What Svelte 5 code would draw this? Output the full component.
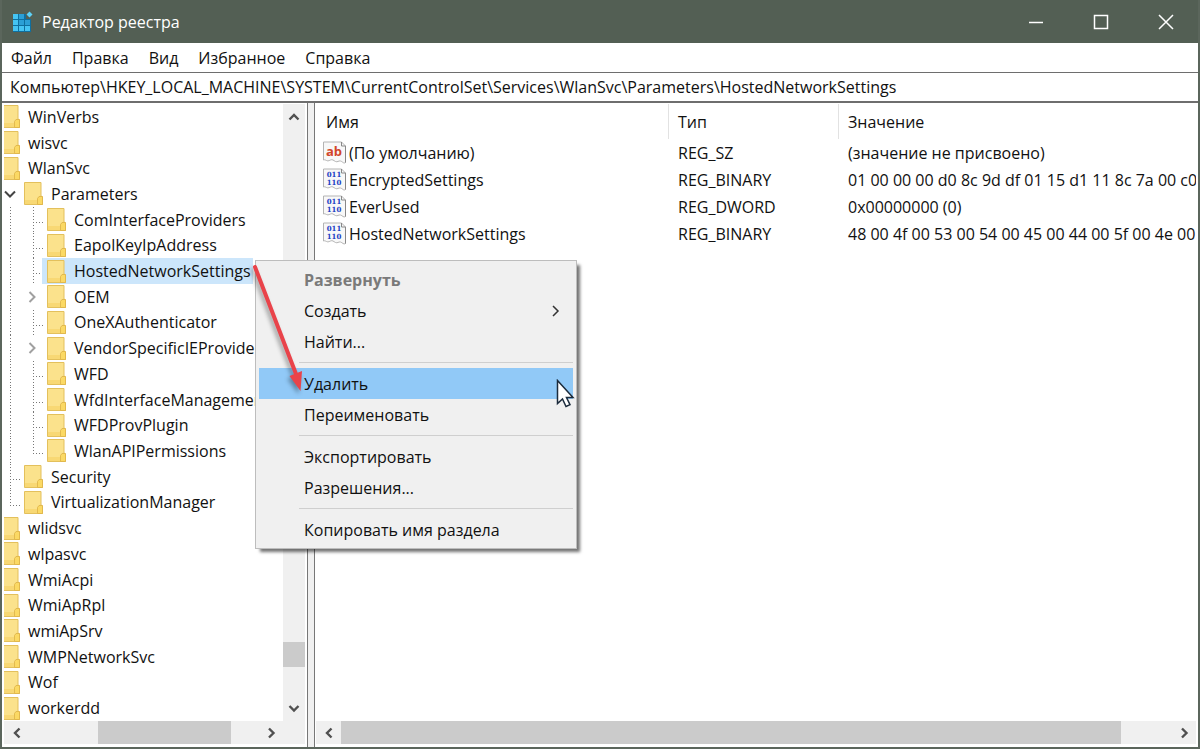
<script lang="ts">
  type Guide = 'line' | 'branch' | 'end' | 'open' | 'closed' | 'none';
  type Node = { name: string; guides: Guide[]; selected?: boolean };

  const menus = ['Файл', 'Правка', 'Вид', 'Избранное', 'Справка'];
  let address = $state(
    'Компьютер\\HKEY_LOCAL_MACHINE\\SYSTEM\\CurrentControlSet\\Services\\WlanSvc\\Parameters\\HostedNetworkSettings'
  );

  const nodes: Node[] = [
    { name: 'WinVerbs', guides: [] },
    { name: 'wisvc', guides: [] },
    { name: 'WlanSvc', guides: [] },
    { name: 'Parameters', guides: ['open'] },
    { name: 'ComInterfaceProviders', guides: ['line', 'branch'] },
    { name: 'EapolKeyIpAddress', guides: ['line', 'branch'] },
    { name: 'HostedNetworkSettings', guides: ['line', 'branch'], selected: true },
    { name: 'OEM', guides: ['line', 'closed'] },
    { name: 'OneXAuthenticator', guides: ['line', 'branch'] },
    { name: 'VendorSpecificIEProviders', guides: ['line', 'closed'] },
    { name: 'WFD', guides: ['line', 'branch'] },
    { name: 'WfdInterfaceManagement', guides: ['line', 'branch'] },
    { name: 'WFDProvPlugin', guides: ['line', 'branch'] },
    { name: 'WlanAPIPermissions', guides: ['line', 'end'] },
    { name: 'Security', guides: ['branch'] },
    { name: 'VirtualizationManager', guides: ['end'] },
    { name: 'wlidsvc', guides: [] },
    { name: 'wlpasvc', guides: [] },
    { name: 'WmiAcpi', guides: [] },
    { name: 'WmiApRpl', guides: [] },
    { name: 'wmiApSrv', guides: [] },
    { name: 'WMPNetworkSvc', guides: [] },
    { name: 'Wof', guides: [] },
    { name: 'workerdd', guides: [] }
  ];

  const values = [
    { icon: 'text', name: '(По умолчанию)', type: 'REG_SZ', data: '(значение не присвоено)' },
    { icon: 'bin', name: 'EncryptedSettings', type: 'REG_BINARY', data: '01 00 00 00 d0 8c 9d df 01 15 d1 11 8c 7a 00 c0 4' },
    { icon: 'bin', name: 'EverUsed', type: 'REG_DWORD', data: '0x00000000 (0)' },
    { icon: 'bin', name: 'HostedNetworkSettings', type: 'REG_BINARY', data: '48 00 4f 00 53 00 54 00 45 00 44 00 5f 00 4e 00 45' }
  ];

  const commands = [
    [
      { label: 'Развернуть', disabled: true },
      { label: 'Создать', sub: true },
      { label: 'Найти...' }
    ],
    [{ label: 'Удалить', active: true }, { label: 'Переименовать' }],
    [{ label: 'Экспортировать' }, { label: 'Разрешения...' }],
    [{ label: 'Копировать имя раздела' }]
  ] as { label: string; disabled?: boolean; sub?: boolean; active?: boolean }[][];
</script>

{#snippet chevron(d: string)}
  <svg width="12" height="12" viewBox="0 0 12 12" aria-hidden="true">
    <path {d} fill="none" stroke="currentColor" stroke-width="2.4" />
  </svg>
{/snippet}

<div class="window">
  <header class="title">
    <svg class="logo" width="22" height="22" viewBox="0 0 22 22" aria-hidden="true">
      <path fill="#0f6f9f" d="M1 3h13v5h5v13H1z" />
      <path fill="#45c4f3" d="M1 3h5v5H1zM1 9h5v5H1zM1 15h5v5H1zM7 15h5v5H7zM13 15h5v5h-5z" />
      <path fill="#2b9fd6" d="M7 3h5v5H7zM7 9h5v5H7zM13 9h5v5h-5z" />
      <path fill="#5ed2f7" d="M17.500 0.500l3 3-3 3-3-3z" />
    </svg>
    <h1>Редактор реестра</h1>
    <div class="controls">
      <button aria-label="Свернуть">
        <svg width="16" height="16" viewBox="0 0 16 16"><path d="M1 8.500h14" /></svg>
      </button>
      <button aria-label="Развернуть окно">
        <svg width="16" height="16" viewBox="0 0 16 16"><path d="M1.500 1.500h13v13h-13z" /></svg>
      </button>
      <button aria-label="Закрыть">
        <svg width="16" height="16" viewBox="0 0 16 16"><path d="M1 1l14 14M15 1L1 15" /></svg>
      </button>
    </div>
  </header>

  <nav class="menubar">
    {#each menus as m}<button>{m}</button>{/each}
  </nav>

  <input class="address" type="text" aria-label="Адрес" bind:value={address} />

  <main>
    <section class="pane keys">
      <ul class="tree">
        {#each nodes as n}
          <li>
            {#each n.guides as g}
              <span class="guide {g}">
                {#if g === 'open'}
                  <svg width="14" height="12" viewBox="0 0 14 12"><path d="M2 3.500l5 5 5-5" fill="none" stroke="#444" stroke-width="2" /></svg>
                {:else if g === 'closed'}
                  <svg width="12" height="14" viewBox="0 0 12 14"><path d="M3.500 2l5 5-5 5" fill="none" stroke="#a0a0a0" stroke-width="2" /></svg>
                {/if}
              </span>
            {/each}
            <button class="node" class:selected={n.selected}>
              <svg width="19" height="23" viewBox="0 0 19 23" aria-hidden="true">
                <path fill="#fbe28c" stroke="#e3c05c" d="M0.500 0.500h16.500v13.500l1.500 1v7.500H0.500z" />
                <path fill="#f6d264" d="M1 18h12v4H1z" opacity=".6" />
                <path fill="#fbd964" stroke="#dfb64b" stroke-width=".9" d="M13.500 22.500v-6l1.500-2h3.500v8z" />
              </svg>
              <span>{n.name}</span>
            </button>
          </li>
        {/each}
      </ul>
      <div class="vbar">
        <button aria-label="Вверх">{@render chevron('M1.500 8.500L6 4l4.500 4.500')}</button>
        <div class="track"><i class="thumb"></i></div>
        <button aria-label="Вниз">{@render chevron('M1.500 4L6 8.500 10.500 4')}</button>
      </div>
      <div class="hbar">
        <button aria-label="Влево">{@render chevron('M8.500 1.500L4 6l4.500 4.500')}</button>
        <div class="track"><i class="thumb"></i></div>
        <button aria-label="Вправо">{@render chevron('M4 1.500L8.500 6 4 10.500')}</button>
      </div>
      <div class="corner"></div>
    </section>

    <section class="pane data">
      <div class="scroll">
        <table>
          <colgroup><col class="c-name" /><col class="c-type" /><col /></colgroup>
          <thead>
            <tr><th>Имя</th><th>Тип</th><th>Значение</th></tr>
          </thead>
          <tbody>
            {#each values as v}
              <tr>
                <td>
                  <div class="value">
                    <svg width="24" height="23" viewBox="0 0 24 23" aria-hidden="true">
                      <path
                        d="M.5 1h18l4 4v16.500c-2 1.500-3-1-5-1.500s-3 1.500-5 .5-3-2.500-5-1.500-3 1-4 .500-2-1-3-.5z"
                        fill="#f8f8f8" stroke="#b4b4b4" />
                      <path d="M18.500 1v4h4v16.500" fill="none" stroke="#888" />
                      {#if v.icon === 'text'}
                        <text x="11" y="15" class="ab">ab</text>
                      {:else}
                        <text x="11" y="9" class="bits">011</text>
                        <text x="11" y="17" class="bits">110</text>
                      {/if}
                    </svg>
                    <span>{v.name}</span>
                  </div>
                </td>
                <td>{v.type}</td>
                <td>{v.data}</td>
              </tr>
            {/each}
          </tbody>
        </table>
      </div>
      <div class="hbar">
        <button aria-label="Влево">{@render chevron('M8.500 1.500L4 6l4.500 4.500')}</button>
        <div class="track"><i class="thumb"></i></div>
        <button aria-label="Вправо">{@render chevron('M4 1.500L8.500 6 4 10.500')}</button>
      </div>
    </section>
  </main>

  <div class="context" role="menu">
    {#each commands as group, i}
      {#if i > 0}<hr />{/if}
      {#each group as c}
        <button role="menuitem" class:active={c.active} disabled={c.disabled}>
          <span>{c.label}</span>
          {#if c.sub}
            <svg width="10" height="14" viewBox="0 0 10 14" aria-hidden="true"><path d="M2 2l5 5-5 5" fill="none" stroke="#333" stroke-width="1.500" /></svg>
          {/if}
        </button>
      {/each}
    {/each}
  </div>

  <svg class="arrow" width="60" height="136" viewBox="0 0 60 136" aria-hidden="true">
    <path d="M6 7L47 114" stroke="#e9434a" stroke-width="4" stroke-linecap="round" fill="none" />
    <path d="M40.500 116l12.500-5-1.500 20z" fill="#e9434a" />
  </svg>
  <svg class="cursor" width="19" height="30" viewBox="0 0 19 30" aria-hidden="true">
    <path d="M1.500 1.500v23l5-4.500 3.500 7.500 4-1.800-3.500-7.200h6.500z" fill="#fff" stroke="#1b2b3c" stroke-width="1.500" />
  </svg>
</div>

<style>
  :global(body) {
    margin: 0;
  }
  .window {
    position: relative;
    box-sizing: border-box;
    height: 100vh;
    display: flex;
    flex-direction: column;
    overflow: hidden;
    border: solid #5b665c;
    border-width: 0 2px 2px;
    background: #fff;
    color: #111;
    font: 16px/20px 'Open Sans', 'Noto Sans', sans-serif;
  }
  button {
    font: inherit;
    color: inherit;
    border: 0;
    margin: 0;
    padding: 0;
    background: none;
    text-align: left;
    white-space: nowrap;
  }
  svg {
    display: block;
    flex: none;
  }

  .title {
    flex: none;
    height: 43px;
    margin: 0 -2px;
    padding: 0 2px 0 12px;
    display: flex;
    align-items: center;
    gap: 8px;
    background: #535f54;
    color: #fff;
  }
  h1 {
    margin: 0;
    font: inherit;
  }
  .controls {
    margin-left: auto;
    display: flex;
    align-self: stretch;
  }
  .controls button {
    width: 65px;
    display: grid;
    place-items: center;
  }
  .controls path {
    fill: none;
    stroke: #fff;
    stroke-width: 1.5;
  }

  .menubar {
    flex: none;
    height: 29px;
    padding-left: 9px;
    display: flex;
    align-items: center;
    gap: 20px;
  }
  .address {
    flex: none;
    height: 31px;
    box-sizing: border-box;
    margin: 0;
    padding: 0 8px;
    border: solid #6e6e6e;
    border-width: 1px 0 2px;
    border-radius: 0;
    outline: 0;
    background: #fff;
    color: inherit;
    font: inherit;
  }

  main {
    flex: 1;
    min-height: 0;
    display: flex;
    gap: 6px;
    background: #f0f0f0;
  }
  .pane {
    box-sizing: border-box;
    background: #fff;
    min-width: 0;
  }
  .keys {
    flex: none;
    width: 306px;
    padding: 1px 2px 3px;
    border-right: 1px solid #777;
    display: grid;
    grid-template: minmax(0, 1fr) 23px / minmax(0, 1fr) 22px;
  }
  .data {
    flex: 1;
    padding: 1px 2px 3px 1px;
    border-left: 1px solid #777;
    display: flex;
    flex-direction: column;
  }

  .tree {
    list-style: none;
    margin: 0;
    padding: 0;
    overflow: hidden;
    display: flex;
    flex-direction: column;
  }
  .tree li {
    flex: 1;
    min-height: 0;
    margin-left: -3px;
    display: flex;
  }
  .guide {
    flex: none;
    width: 23px;
    display: flex;
    align-items: center;
    padding-left: 2px;
    box-sizing: border-box;
    background-repeat: no-repeat;
  }
  .line {
    background-image: repeating-linear-gradient(#777 0 1px, transparent 1px 3px);
    background-size: 1px 100%;
    background-position: 9px 0;
  }
  .branch,
  .end {
    background-image: repeating-linear-gradient(#777 0 1px, transparent 1px 3px),
      repeating-linear-gradient(90deg, #777 0 1px, transparent 1px 3px);
    background-size: 1px 100%, 10px 1px;
    background-position: 9px 0, 9px 15px;
  }
  .end {
    background-size: 1px 15px, 10px 1px;
  }
  .node {
    position: relative;
    margin-left: -5px;
    padding: 0 2px 0 5px;
    display: flex;
    align-items: center;
    gap: 8px;
  }
  .selected {
    background: #cce6fb;
  }

  .vbar,
  .hbar,
  .corner {
    background: #f0f0f0;
    color: #505050;
    display: flex;
  }
  .vbar {
    flex-direction: column;
  }
  .vbar button,
  .hbar button {
    flex: none;
    display: grid;
    place-items: center;
    width: 22px;
    height: 26px;
  }
  .hbar {
    flex: none;
    height: 23px;
  }
  .hbar button {
    width: 25px;
    height: 23px;
  }
  .track {
    flex: 1;
    display: flex;
  }
  .thumb {
    background: #cbcbcb;
  }
  .vbar .track {
    flex-direction: column;
    justify-content: flex-end;
    padding-bottom: 28px;
  }
  .vbar .thumb {
    height: 25px;
  }
  .keys .hbar .thumb {
    margin-left: 30%;
    width: 58%;
  }
  .data .hbar .thumb {
    width: 94%;
  }

  .scroll {
    flex: 1;
    min-height: 0;
    overflow: hidden;
  }
  table {
    width: 100%;
    table-layout: fixed;
    border-collapse: separate;
    border-spacing: 0;
  }
  .c-name {
    width: 353px;
  }
  .c-type {
    width: 170px;
  }
  th,
  td {
    box-sizing: border-box;
    padding: 0 0 0 9px;
    text-align: left;
    font-weight: 400;
    white-space: nowrap;
    overflow: hidden;
  }
  th {
    height: 35px;
    border-right: 1px solid #e2e2e2;
  }
  th:last-child {
    border-right: 0;
  }
  td {
    height: 27px;
  }
  th:first-child {
    padding-left: 10px;
  }
  td:first-child {
    padding-left: 7px;
  }
  .value {
    display: flex;
    align-items: center;
    gap: 2px;
  }
  .ab {
    font: bold 13px 'Open Sans', sans-serif;
    fill: #d2452a;
    text-anchor: middle;
  }
  .bits {
    font: bold 7px 'DejaVu Serif', serif;
    fill: #1c3fc4;
    text-anchor: middle;
  }

  .context {
    position: absolute;
    left: 253px;
    top: 260px;
    width: 322px;
    box-sizing: border-box;
    padding: 3px;
    border: 1px solid #bdbdbd;
    background: #f0f0f0;
    box-shadow: 4px 4px 3px -1px rgba(0, 0, 0, 0.55);
    display: flex;
    flex-direction: column;
  }
  .context button {
    height: 31px;
    padding: 0 12px 0 45px;
    display: flex;
    align-items: center;
    justify-content: space-between;
  }
  .context button:disabled {
    color: #7a7a7a;
    font-weight: 700;
  }
  .context .active {
    background: #91c9f7;
  }
  hr {
    width: auto;
    margin: 5px 0 5px 40px;
    border: 0;
    height: 1px;
    background: #cfcfcf;
  }
  .arrow {
    position: absolute;
    left: 247px;
    top: 260px;
    filter: drop-shadow(-2px 3px 2px rgba(0, 0, 0, 0.35));
    pointer-events: none;
  }
  .cursor {
    position: absolute;
    left: 554px;
    top: 379px;
    pointer-events: none;
  }
</style>
